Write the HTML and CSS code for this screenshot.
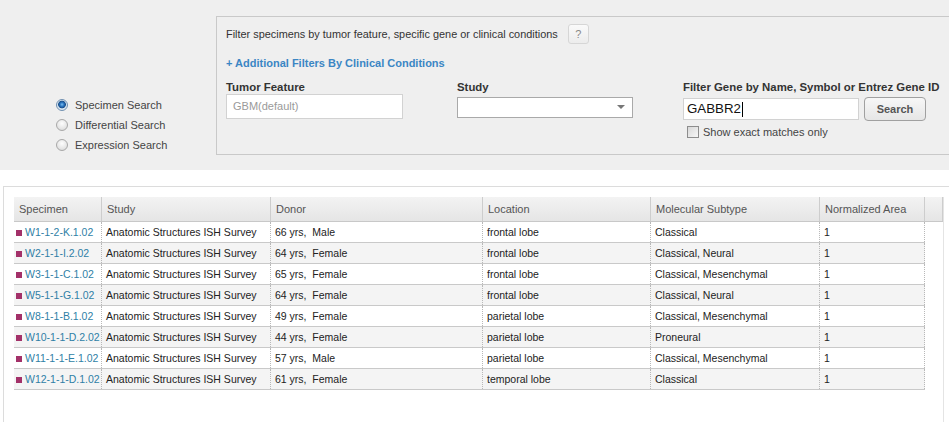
FILE: index.html
```html
<!DOCTYPE html>
<html>
<head>
<meta charset="utf-8">
<link rel="stylesheet" href="styles.css">
</head>
<body>
<div class="top">
  <div class="modes">
    <label class="mode"><input type="radio" name="mode" checked> Specimen Search</label>
    <label class="mode"><input type="radio" name="mode"> Differential Search</label>
    <label class="mode"><input type="radio" name="mode"> Expression Search</label>
  </div>
  <div class="panel">
    <div class="intro">
      <span>Filter specimens by tumor feature, specific gene or clinical conditions</span>
      <span class="help">?</span>
    </div>
    <a class="addlink">+ Additional Filters By Clinical Conditions</a>
    <div class="fields">
      <div class="field">
        <div class="flabel">Tumor Feature</div>
        <div class="tinput">GBM(default)</div>
      </div>
      <div class="field">
        <div class="flabel">Study</div>
        <div class="select"><span class="arrow"></span></div>
      </div>
      <div class="field">
        <div class="flabel">Filter Gene by Name, Symbol or Entrez Gene ID</div>
        <div class="generow">
          <div class="ginput">GABBR2<span class="caret"></span></div>
          <span class="btn">Search</span>
        </div>
        <label class="exact"><span class="chk"></span>Show exact matches only</label>
      </div>
    </div>
  </div>
</div>
<div class="results">
  <div class="wrap">
    <div class="head">
      <div>Specimen</div><div>Study</div><div>Donor</div><div>Location</div><div>Molecular Subtype</div><div>Normalized Area</div><div></div>
    </div>
    <div class="row"><div><i class="sq"></i><a>W1-1-2-K.1.02</a></div><div>Anatomic Structures ISH Survey</div><div>66 yrs,&nbsp; Male</div><div>frontal lobe</div><div>Classical</div><div>1</div></div>
    <div class="row alt"><div><i class="sq"></i><a>W2-1-1-I.2.02</a></div><div>Anatomic Structures ISH Survey</div><div>64 yrs,&nbsp; Female</div><div>frontal lobe</div><div>Classical, Neural</div><div>1</div></div>
    <div class="row"><div><i class="sq"></i><a>W3-1-1-C.1.02</a></div><div>Anatomic Structures ISH Survey</div><div>65 yrs,&nbsp; Female</div><div>frontal lobe</div><div>Classical, Mesenchymal</div><div>1</div></div>
    <div class="row alt"><div><i class="sq"></i><a>W5-1-1-G.1.02</a></div><div>Anatomic Structures ISH Survey</div><div>64 yrs,&nbsp; Female</div><div>frontal lobe</div><div>Classical, Neural</div><div>1</div></div>
    <div class="row"><div><i class="sq"></i><a>W8-1-1-B.1.02</a></div><div>Anatomic Structures ISH Survey</div><div>49 yrs,&nbsp; Female</div><div>parietal lobe</div><div>Classical, Mesenchymal</div><div>1</div></div>
    <div class="row alt"><div><i class="sq"></i><a>W10-1-1-D.2.02</a></div><div>Anatomic Structures ISH Survey</div><div>44 yrs,&nbsp; Female</div><div>parietal lobe</div><div>Proneural</div><div>1</div></div>
    <div class="row"><div><i class="sq"></i><a>W11-1-1-E.1.02</a></div><div>Anatomic Structures ISH Survey</div><div>57 yrs,&nbsp; Male</div><div>parietal lobe</div><div>Classical, Mesenchymal</div><div>1</div></div>
    <div class="row alt"><div><i class="sq"></i><a>W12-1-1-D.1.02</a></div><div>Anatomic Structures ISH Survey</div><div>61 yrs,&nbsp; Female</div><div>temporal lobe</div><div>Classical</div><div>1</div></div>
  </div>
</div>
</body>
</html>
```
FILE: styles.css
```css
* { box-sizing: border-box; }
html, body { margin: 0; padding: 0; background: #fff; }
body {
  font-family: "Liberation Sans", Arial, sans-serif;
  font-size: 11px;
  color: #333;
  width: 949px;
  height: 422px;
  overflow: hidden;
}
.top {
  background: #efefef;
  height: 170px;
  padding-top: 16px;
  display: flex;
  align-items: flex-start;
}
.modes {
  width: 216px;
  flex: none;
  padding-top: 79px;
  padding-left: 56px;
  display: flex;
  flex-direction: column;
}
.mode {
  height: 20px;
  display: flex;
  align-items: center;
  color: #444;
}
.mode input {
  appearance: none;
  -webkit-appearance: none;
  margin: 0 7px 0 0;
  width: 12px;
  height: 12px;
  border-radius: 50%;
  border: 1px solid #a8a8a8;
  background: radial-gradient(circle at 50% 35%, #fdfdfd 0, #e2e2e2 70%, #d0d0d0 100%);
}
.mode input:checked {
  border-color: #6f8fb0;
  background: radial-gradient(circle at 50% 45%, #7cc0f0 0, #2a74c0 2px, #1a4f8a 3.5px, #d6e3ef 4.2px, #eef2f6 100%);
}
.panel {
  flex: 1;
  height: 139px;
  border: 1px solid #c9c9c9;
  border-right: none;
  padding-left: 9px;
}
.intro {
  margin-top: 7px;
  height: 20px;
  display: flex;
  align-items: center;
  gap: 10px;
  font-size: 10.9px;
}
.help {
  width: 21px;
  height: 20px;
  border: 1px solid #d6d6d6;
  border-radius: 3px;
  background: linear-gradient(#fafafa, #ececec);
  color: #888;
  display: flex;
  align-items: center;
  justify-content: center;
  font-size: 11px;
}
.addlink {
  display: block;
  margin-top: 12px;
  line-height: 14px;
  font-weight: bold;
  font-size: 11px;
  color: #3b86c4;
}
.fields {
  margin-top: 10px;
  display: grid;
  grid-template-columns: 231px 226px auto;
}
.flabel {
  font-weight: bold;
  font-size: 11.4px;
  line-height: 14px;
  color: #333;
}
.tinput {
  width: 177px;
  height: 25px;
  background: #fff;
  border: 1px solid #d2d2d2;
  color: #9a9a9a;
  padding-left: 6px;
  line-height: 23px;
}
.select {
  margin-top: 3px;
  width: 176px;
  height: 21px;
  background: #fff;
  border: 1px solid #a9a9a9;
  position: relative;
}
.arrow {
  position: absolute;
  right: 7px;
  top: 7px;
  width: 0;
  height: 0;
  border-left: 4px solid transparent;
  border-right: 4px solid transparent;
  border-top: 4px solid #777;
}
.generow {
  display: flex;
  align-items: flex-start;
}
.ginput {
  margin-top: 4px;
  width: 176px;
  height: 22px;
  background: #fff;
  border: 1px solid #d2d2d2;
  font-size: 13.3px;
  color: #111;
  padding-left: 3px;
  line-height: 20px;
  display: flex;
  align-items: center;
}
.caret {
  display: inline-block;
  width: 1px;
  height: 15px;
  background: #000;
  margin-left: 1px;
}
.btn {
  margin-top: 3px;
  margin-left: 5px;
  width: 62px;
  height: 24px;
  border: 1px solid #a0a0a0;
  border-radius: 4px;
  background: linear-gradient(#f7f7f7, #e6e6e6);
  color: #555;
  font-weight: bold;
  font-size: 11px;
  display: flex;
  align-items: center;
  justify-content: center;
}
.exact {
  margin-top: 4px;
  margin-left: 4px;
  display: flex;
  align-items: center;
  color: #444;
  height: 14px;
}
.chk {
  width: 12px;
  height: 12px;
  border: 1px solid #8d8d8d;
  background: linear-gradient(135deg, #d8d8d8, #f6f6f6);
  margin-right: 4px;
}
.results {
  margin-top: 16px;
  margin-left: 3px;
  height: 236px;
  border-top: 1px solid #dcdcdc;
  border-left: 1px solid #dcdcdc;
  padding-top: 10px;
  padding-left: 10px;
}
.wrap {
  width: 930px;
  height: 230px;
  border-right: 1px solid #e4e4e4;
}
.head {
  display: grid;
  grid-template-columns: 88px 169px 212px 168px 169px 105px 18px;
  height: 25px;
  background: linear-gradient(#f3f3f3, #e5e5e5);
  border-bottom: 1px solid #c8c8c8;
}
.head div {
  border-right: 1px solid #cdcdcd;
  padding-left: 5px;
  line-height: 24px;
  color: #555;
  white-space: nowrap;
}
.row {
  display: grid;
  grid-template-columns: 88px 169px 212px 168px 169px 105px;
  height: 21px;
  border-bottom: 1px solid #c9c9c9;
  width: 911px;
  background: #fff;
  font-size: 10.5px;
}
.row.alt { background: #f4f4f4; }
.row div {
  border-right: 1px dotted #b8b8b8;
  padding-left: 4px;
  line-height: 20px;
  white-space: nowrap;
  overflow: hidden;
  color: #222;
}
.row div:first-child { padding-left: 2px; }
.sq {
  display: inline-block;
  width: 6px;
  height: 6px;
  background: #a33169;
  margin-right: 3px;
  vertical-align: 0px;
}
.row a { color: #2f7fa6; }
```
